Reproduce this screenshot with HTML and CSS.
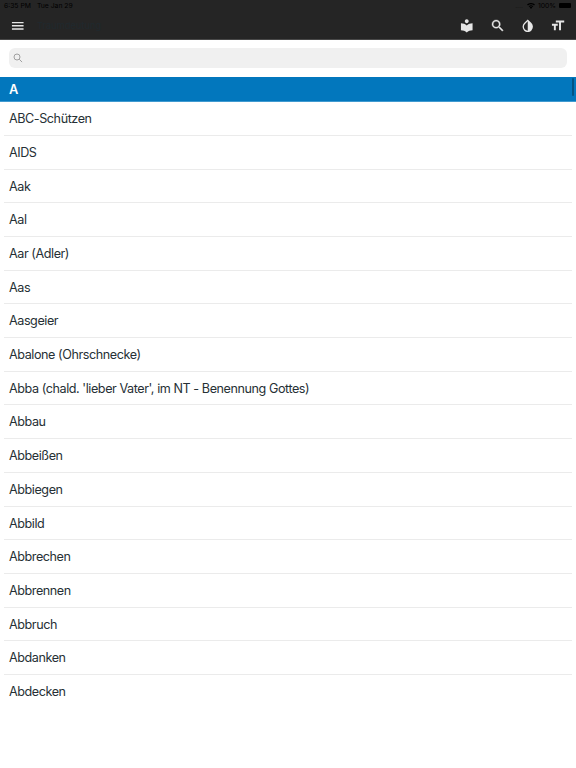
FILE: index.html
```html
<!DOCTYPE html>
<html lang="de">
<head>
    <meta charset="utf-8">
    <title>Traumdeutung</title>
    <link rel="stylesheet" href="styles.css">
</head>
<body>
    <header class="header">
        <div class="status-bar">
            <span>6:35 PM</span>
            <span class="status-date">Tue Jan 29</span>
            <span class="status-dots">....</span>
            <svg class="wifi" viewBox="0 0 24 18"><path d="M12 18l4-5a6 6 0 0 0-8 0zM5 9.500l2 2.500a8 8 0 0 1 10 0l2-2.500a11 11 0 0 0-14 0zM0 4.500l3 3a14 14 0 0 1 18 0l3-3a18 18 0 0 0-24 0z"/></svg>
            <span class="status-percent">100%</span>
            <span class="battery"></span>
        </div>
        <div class="toolbar">
            <svg class="icon" viewBox="0 0 24 24"><path d="M3 18h18v-2H3v2zm0-5h18v-2H3v2zm0-7v2h18V6H3z"/></svg>
            <span class="title">Traumdeutung</span>
            <svg class="icon" viewBox="0 0 24 24"><path d="M12 11.550C9.640 9.350 6.480 8 3 8v11c3.480 0 6.640 1.350 9 3.550 2.360-2.190 5.520-3.550 9-3.550V8c-3.480 0-6.640 1.350-9 3.550zM12 8c1.660 0 3-1.340 3-3s-1.340-3-3-3-3 1.340-3 3 1.340 3 3 3z"/></svg>
            <svg class="icon icon-search" viewBox="0 0 24 24"><path d="M15.500 14h-.79l-.28-.27A6.471 6.471 0 0 0 16 9.500 6.500 6.500 0 1 0 9.500 16c1.610 0 3.090-.59 4.230-1.570l.27.28v.79l5 4.990L20.490 19l-4.990-5zm-6 0C7.010 14 5 11.990 5 9.500S7.010 5 9.500 5 14 7.010 14 9.500 11.990 14 9.500 14z"/></svg>
            <svg class="icon" viewBox="0 0 24 24"><path d="M17.660 7.930L12 2.270 6.340 7.930c-3.120 3.120-3.120 8.190 0 11.310C7.900 20.800 9.950 21.580 12 21.580s4.100-.78 5.660-2.340c3.120-3.120 3.120-8.190 0-11.310zM12 19.590c-1.600 0-3.110-.62-4.240-1.760C6.620 16.690 6 15.190 6 13.590s.62-3.110 1.760-4.240L12 5.100v14.490z"/></svg>
            <svg class="icon" viewBox="0 0 24 24"><path d="M9 4v3h5v12h3V7h5V4H9zm-6 8h3v7h3v-7h3V9H3v3z"/></svg>
        </div>
    </header>

    <div class="search">
        <div class="search-field">
            <svg class="search-icon" viewBox="0 0 10 10"><circle cx="4" cy="4" r="3"/><path d="M6.200 6.200l2.900 2.900"/></svg>
        </div>
    </div>

    <main class="content">
        <h2 class="letter">A</h2>
        <ul class="word-list">
            <li>ABC-Schützen</li>
            <li>AIDS</li>
            <li>Aak</li>
            <li>Aal</li>
            <li>Aar (Adler)</li>
            <li>Aas</li>
            <li>Aasgeier</li>
            <li>Abalone (Ohrschnecke)</li>
            <li>Abba (chald. 'lieber Vater', im NT - Benennung Gottes)</li>
            <li>Abbau</li>
            <li>Abbeißen</li>
            <li>Abbiegen</li>
            <li>Abbild</li>
            <li>Abbrechen</li>
            <li>Abbrennen</li>
            <li>Abbruch</li>
            <li>Abdanken</li>
            <li>Abdecken</li>
        </ul>
        <div class="scrollbar"></div>
    </main>
</body>
</html>
```
FILE: styles.css
```css
* {
    box-sizing: border-box;
}
body {
    margin: 0;
    height: 768px;
    overflow: hidden;
    background: #fff;
    color: #263035;
    font-family: Inter, "Liberation Sans", sans-serif;
}
.header {
    height: 40px;
    background: #252525;
    border-bottom: 1px solid #484848;
}
.status-bar {
    display: flex;
    align-items: center;
    height: 11px;
    padding: 0 5px 0 4px;
    font-size: 6.8px;
    line-height: 12px;
    color: #000;
}
.status-date {
    margin-left: 6px;
}
.status-dots {
    margin-left: auto;
    color: #171717;
}
.wifi {
    width: 8px;
    height: 6px;
    margin-left: 4px;
    fill: #000;
}
.status-percent {
    margin-left: 3px;
}
.battery {
    width: 12px;
    height: 5px;
    margin-left: 3px;
    border-radius: 1px;
    background: #000;
}
.toolbar {
    display: flex;
    align-items: center;
    gap: 14.9px;
    height: 29px;
    padding: 0 10.2px;
}
.icon {
    flex: none;
    width: 15.5px;
    height: 15.5px;
    fill: #e6e6e6;
}
.icon-search {
    stroke: #e6e6e6;
    stroke-width: 0.5;
}
.title {
    flex: 1;
    margin-left: -3.5px;
    font-size: 9.3px;
    color: #20292e;
}
.search {
    height: 37px;
    padding: 8px 9px 9px;
}
.search-field {
    display: flex;
    align-items: center;
    height: 20px;
    padding-left: 4px;
    border-radius: 6px;
    background: #f0f0f0;
}
.search-icon {
    width: 10px;
    height: 10px;
    fill: none;
    stroke: #a0a0a0;
    stroke-width: 1;
}
.content {
    position: relative;
}
.letter {
    height: 25px;
    margin: 0;
    padding-left: 9px;
    border-bottom: 1px solid #409ad0;
    background: #0277bd;
    color: #fff;
    font-size: 12.8px;
    font-weight: 600;
    line-height: 25px;
}
.word-list {
    margin: 0;
    padding: 0.3px 4px 0;
    list-style: none;
}
.word-list li {
    height: 33.7px;
    padding-left: 5px;
    border-bottom: 1px solid #ebebeb;
    font-size: 12.6px;
    letter-spacing: -0.43px;
    line-height: 34.4px;
}
.word-list li:last-child {
    border-bottom: none;
}
/* overlays the list at the right edge */
.scrollbar {
    position: absolute;
    top: 1px;
    right: 2px;
    width: 2px;
    height: 18px;
    border-radius: 1px;
    background: #015384;
}
```
